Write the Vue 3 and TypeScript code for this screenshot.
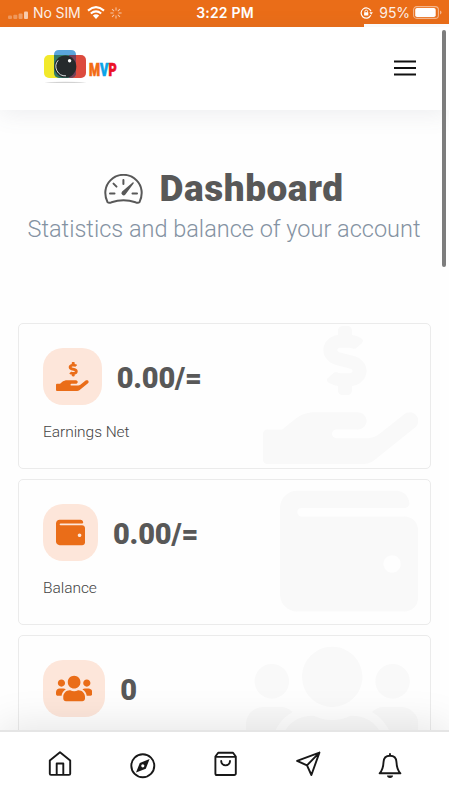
<script setup lang="ts">
interface Shape {
  viewBox: string
  path: string
}

interface Stat {
  value: string
  label: string
  icon: Shape
}

const earnings: Shape = {
  viewBox: '0 0 576 512',
  path: 'M271.06,144.3l54.27,14.3a8.59,8.59,0,0,1,6.63,8.1c0,4.6-4.09,8.4-9.12,8.4h-35.6a30,30,0,0,1-11.19-2.2c-5.24-2.2-11.28-1.7-15.3,2l-19,17.5a11.68,11.68,0,0,0-2.25,2.66,11.42,11.42,0,0,0,3.88,15.74,83.77,83.77,0,0,0,34.51,11.5V240c0,8.8,7.83,16,17.37,16h17.37c9.55,0,17.38-7.2,17.38-16V222.4c32.93-3.6,57.84-31,53.5-63-3.15-23-22.46-41.3-46.56-47.7L282.68,97.4a8.59,8.59,0,0,1-6.63-8.1c0-4.6,4.09-8.4,9.12-8.4h35.6A30,30,0,0,1,332,83.1c5.23,2.2,11.28,1.7,15.3-2l19-17.5A11.31,11.31,0,0,0,368.47,61a11.43,11.43,0,0,0-3.84-15.78,83.82,83.82,0,0,0-34.52-11.5V16c0-8.8-7.82-16-17.37-16H295.37C285.82,0,278,7.2,278,16V33.6c-32.89,3.6-57.85,31-53.51,63C227.63,119.6,247,137.9,271.06,144.3ZM565.3 328.1c-11.8-10.7-30.2-10-42.6 0L430.3 402c-11.3 9.1-25.4 14-40 14H272c-8.8 0-16-7.2-16-16s7.2-16 16-16h78.3c15.9 0 30.7-10.9 33.3-26.6 3.3-20-12.1-37.4-31.6-37.4H192c-27 0-53.1 9.3-74.1 26.3L71.4 384H16c-8.8 0-16 7.2-16 16v96c0 8.8 7.2 16 16 16h356.8c14.5 0 28.6-4.9 40-14L564 377c15.2-12.1 16.4-35.3 1.3-48.9z',
}

const wallet: Shape = {
  viewBox: '0 0 512 512',
  path: 'M461.2 128H80c-8.84 0-16-7.16-16-16s7.16-16 16-16h384c8.84 0 16-7.16 16-16 0-26.51-21.49-48-48-48H64C28.65 32 0 60.65 0 96v320c0 35.35 28.65 64 64 64h397.2c28.02 0 50.8-21.53 50.8-48V176c0-26.47-22.78-48-50.8-48zM416 336c-17.67 0-32-14.33-32-32s14.33-32 32-32 32 14.33 32 32-14.33 32-32 32z',
}

const users: Shape = {
  viewBox: '0 0 640 512',
  path: 'M96 224c35.3 0 64-28.7 64-64s-28.7-64-64-64-64 28.7-64 64 28.7 64 64 64zm448 0c35.3 0 64-28.7 64-64s-28.7-64-64-64-64 28.7-64 64 28.7 64 64 64zm32 32h-64c-17.6 0-33.5 7.1-45.1 18.6 40.3 22.1 68.9 62 75.1 109.4h66c17.7 0 32-14.3 32-32v-32c0-35.3-28.7-64-64-64zm-256 0c61.9 0 112-50.1 112-112S381.9 32 320 32 208 82.1 208 144s50.1 112 112 112zm76.8 32h-8.3c-20.8 10-43.9 16-68.5 16s-47.6-6-68.5-16h-8.3C179.6 288 128 339.6 128 403.2V432c0 26.5 21.5 48 48 48h288c26.5 0 48-21.5 48-48v-28.8c0-63.6-51.6-115.2-115.2-115.2zm-223.7-13.4C161.5 263.1 145.6 256 128 256H64c-35.3 0-64 28.7-64 64v32c0 17.7 14.3 32 32 32h65.9c6.3-47.4 34.9-87.3 75.2-109.4z',
}

const stats: Stat[] = [
  { value: '0.00/=', label: 'Earnings Net', icon: earnings },
  { value: '0.00/=', label: 'Balance', icon: wallet },
  { value: '0', label: '', icon: users },
]

const spokes: number[] = [0, 45, 90, 135, 180, 225, 270, 315]
</script>

<template>
  <div class="screen">
    <div class="status">
      <div class="status-left">
        <svg class="signal" viewBox="0 0 20 8">
          <rect x="0" y="4.5" width="4" height="3.5" rx="1" opacity=".3" />
          <rect x="5.3" y="3.8" width="4" height="4.2" rx="1" opacity=".3" />
          <rect x="10.6" y="2.5" width="4" height="5.5" rx="1" opacity=".35" />
          <rect x="16" y="0.5" width="4" height="7.5" rx="1" opacity=".65" />
        </svg>
        <span class="carrier">No SIM</span>
        <svg class="wifi" viewBox="0 0 18 13">
          <path d="M1 4.6Q9-2.2 17 4.6M3.8 7.5Q9 3.2 14.2 7.5" fill="none" stroke="#fff" stroke-width="2.1" />
          <path d="M5.8 9.6Q9 7 12.2 9.6L9 13Z" fill="#fff" />
        </svg>
        <svg class="spinner" viewBox="-6 -6 12 12">
          <path v-for="a in spokes" :key="a" d="M0-2.5V-5.6" :transform="`rotate(${a})`" stroke="#fff" stroke-width="1" opacity=".65" />
        </svg>
      </div>
      <span class="clock">3:22 PM</span>
      <div class="status-right">
        <svg class="lock" viewBox="0 0 13 12">
          <path d="M10.8 8.3A5.1 5.1 0 1 1 11 4.3" fill="none" stroke="#fff" stroke-width="1.2" />
          <path d="M9.4 5.3h3.5l-1.7 2.4z" fill="#fff" />
          <rect x="4.1" y="5.3" width="4.2" height="3.3" rx=".4" fill="#fff" />
          <path d="M4.9 5.5V4.4a1.3 1.3 0 0 1 2.6 0v1.1" fill="none" stroke="#fff" stroke-width=".9" />
        </svg>
        <span class="percent">95%</span>
        <svg class="battery" viewBox="0 0 29 13">
          <rect x=".6" y=".6" width="24.8" height="11.8" rx="3.2" fill="none" stroke="#fff" stroke-opacity=".5" stroke-width="1.1" />
          <rect x="2.2" y="2" width="20.5" height="9" rx="1.8" fill="#fff" />
          <path d="M27 4.5q1.5.7 1.5 2t-1.5 2z" fill="#fff" opacity=".5" />
        </svg>
      </div>
      <i class="progress-gap"></i>
    </div>

    <header class="topbar">
      <div class="brand">
        <svg class="camera" viewBox="0 0 44 34">
          <ellipse cx="22.5" cy="32.3" rx="21" ry=".6" fill="#d2d2d2" />
          <rect x="1" y="5" width="25" height="23" rx="5" fill="#f2e92b" />
          <rect x="17" y="5" width="26" height="23" rx="5" fill="#dc4b3e" />
          <path d="M11 5h22v18a5 5 0 0 1-5 5H16a5 5 0 0 1-5-5z" fill="#337a68" />
          <path d="M26 5h7v18a5 5 0 0 1-5 5h-2z" fill="#773f58" />
          <path d="M11 5q0-5 5-5h12q5 0 5 5z" fill="#5aa5dc" />
          <circle cx="22.3" cy="16.6" r="11" fill="#252a2c" />
          <path d="M15.2 10.3A9.4 9.4 0 0 0 23 25.8" fill="none" stroke="#e8eded" stroke-width=".9" />
          <circle cx="26.6" cy="10.8" r="1.7" fill="#fff" />
        </svg>
        <span class="brand-name"><b class="m">M</b><b class="v">V</b><b class="p">P</b></span>
      </div>
      <svg class="menu" viewBox="0 0 22 16">
        <path d="M0 1.4h22M0 8h22M0 14.6h22" stroke="#111" stroke-width="2" />
      </svg>
    </header>

    <main class="content">
      <div class="heading">
        <svg class="gauge" viewBox="0 0 39 30">
          <path d="M3.5 28.1C-.2 20.5.8 12 6.4 6.4A18.2 18.2 0 0 1 32.6 6.4C38.2 12 39.2 20.5 35.5 28.1C34.6 29 33.2 29 31.5 28.3C23 25.4 16 25.4 7.5 28.3C5.8 29 4.4 29 3.5 28.1Z" />
          <path d="M19.4 6v4M9.5 9.6l3 3M6 19.6h4.5M28.5 19.6H33" />
          <path class="needle" d="M28.6 8.5c.7-.5 1.5.2 1 .9L21.4 20.4a2.2 2.2 0 1 1-3.3-2.9z" />
        </svg>
        <h1>Dashboard</h1>
      </div>
      <p class="subtitle">Statistics and balance of your account</p>

      <section class="cards">
        <article v-for="(stat, i) in stats" :key="i" class="card">
          <svg class="watermark" :viewBox="stat.icon.viewBox"><path :d="stat.icon.path" /></svg>
          <div class="row">
            <div class="badge">
              <svg class="glyph" :viewBox="stat.icon.viewBox"><path :d="stat.icon.path" /></svg>
            </div>
            <strong class="value">{{ stat.value }}</strong>
          </div>
          <div v-if="stat.label" class="label">{{ stat.label }}</div>
        </article>
      </section>
    </main>

    <i class="scrollbar"></i>

    <nav class="tabs">
      <svg class="tab" viewBox="0 0 28 28">
        <path d="M3.8 10.4 14 2.3l10.2 8.1v13.3a1.2 1.2 0 0 1-1.2 1.2H5a1.2 1.2 0 0 1-1.2-1.2zM10.7 24.8V13.5h6.6v11.3" />
      </svg>
      <svg class="tab" viewBox="0 0 28 28">
        <circle cx="13.8" cy="15.8" r="11.5" />
        <path class="solid" fill-rule="evenodd" d="M20.6 9 16.8 18.7 7 22.6 10.8 12.9zM13.8 14.2a1.6 1.6 0 1 0 0 3.2 1.6 1.6 0 0 0 0-3.2z" />
      </svg>
      <svg class="tab" viewBox="0 0 28 28">
        <path d="M4.4 6.5 7.2 2.7h14.8l2.8 3.8v16.9a1.6 1.6 0 0 1-1.6 1.6H6a1.6 1.6 0 0 1-1.6-1.6zM4.4 6.9h20.4M10.2 11a4.4 4.4 0 0 0 8.8 0" />
      </svg>
      <svg class="tab" viewBox="0 0 28 28">
        <path d="M25.4 2.6 17.4 25 13 15.3 3.1 10.9zM25.4 2.6 13 15.3" />
      </svg>
      <svg class="tab" viewBox="0 0 28 28">
        <path d="M14 5.8c4.1 0 6.3 2.6 6.5 6.4.2 5.2 1.2 8.2 3.9 11.1H3.6c2.7-2.9 3.7-5.9 3.9-11.1.2-3.8 2.4-6.4 6.5-6.4zM14 4v1.6" />
        <path class="solid" d="M11 25.6h6a3 2.4 0 0 1-6 0z" />
      </svg>
    </nav>
  </div>
</template>

<style>
body {
  margin: 0;
  overflow: hidden;
  background: #fff;
}
</style>

<style scoped>
.screen {
  position: relative;
  display: flex;
  flex-direction: column;
  width: 100%;
  height: 800px;
  overflow: hidden;
  background: #fefefe;
  color: #585858;
  font-family: Roboto, "Liberation Sans", sans-serif;
}
.status {
  position: relative;
  display: grid;
  grid-template-columns: 1fr auto 1fr;
  align-items: center;
  flex: none;
  height: 27px;
  padding: 0 7px 0 8px;
  box-sizing: border-box;
  background: #ea6d18;
  color: #fff;
  font: 400 14px/25px Inter, Roboto, sans-serif;
}
.status-left,
.status-right {
  display: flex;
  align-items: center;
  height: 25px;
  align-self: start;
}
.status-right {
  justify-content: flex-end;
}
.signal {
  width: 20px;
  height: 8px;
  margin: 4px 5px 0 0;
  fill: #fff;
}
.carrier {
  width: 47px;
  letter-spacing: -0.1px;
  white-space: nowrap;
  opacity: 0.9;
}
.wifi {
  width: 18px;
  height: 13px;
  margin-left: 7px;
}
.spinner {
  width: 12px;
  height: 12px;
  margin-left: 5px;
}
.clock {
  align-self: start;
  font-weight: 600;
  letter-spacing: 0.2px;
}
.lock {
  width: 13px;
  height: 12px;
  margin-right: 6px;
}
.percent {
  letter-spacing: -0.1px;
  opacity: 0.9;
}
.battery {
  width: 29px;
  height: 13px;
  margin-left: 3px;
}
.progress-gap {
  position: absolute;
  right: 0;
  bottom: 0;
  width: 85px;
  height: 3px;
  background: #fff;
}
.topbar {
  position: relative;
  display: flex;
  align-items: center;
  justify-content: space-between;
  flex: none;
  height: 83px;
  padding: 0 33px 1px 43px;
  box-sizing: border-box;
  background: #fff;
  box-shadow: 0 4px 22px rgba(90, 100, 115, 0.1);
}
.brand {
  display: flex;
  align-items: center;
  margin-top: -2px;
}
.camera {
  width: 44px;
  height: 34px;
}
.brand-name {
  display: flex;
  margin: 6px 0 0 2px;
  font: 900 17.5px/18px Roboto, sans-serif;
  -webkit-text-stroke: 0.7px;
  transform: scaleX(0.72);
  transform-origin: left;
}
.brand-name b {
  font-weight: 900;
}
.m {
  color: #f26b13;
}
.v {
  color: #0aa4e8;
}
.p {
  color: #ec1027;
}
.menu {
  width: 22px;
  height: 16px;
}
.content {
  flex: 1;
  min-height: 0;
}
.heading {
  display: flex;
  align-items: center;
  justify-content: center;
  height: 44px;
  padding: 57px 1px 0 0;
  gap: 17px;
}
.gauge {
  width: 39px;
  height: 30px;
  margin-top: -1px;
  fill: none;
  stroke: #585858;
  stroke-width: 2;
  stroke-linecap: round;
}
.gauge .needle {
  fill: #585858;
  stroke: none;
}
h1 {
  margin: 0;
  width: 185px;
  font-size: 37px;
  font-weight: 900;
  line-height: 44px;
  letter-spacing: 0.55px;
  white-space: nowrap;
}
.subtitle {
  margin: 0 1px 0 0;
  height: 36px;
  text-align: center;
  font-size: 23.5px;
  font-weight: 300;
  line-height: 37px;
  color: #8492a2;
  white-space: nowrap;
}
.cards {
  display: flex;
  flex-direction: column;
  gap: 10px;
  padding: 76px 18px 0;
}
.card {
  position: relative;
  box-sizing: border-box;
  height: 146px;
  padding: 24px;
  border: 1px solid #ebebeb;
  border-radius: 5px;
  overflow: hidden;
}
.watermark {
  position: absolute;
  top: 2px;
  right: 12px;
  height: 138px;
  fill: #f9f9f9;
}
.row {
  position: relative;
  display: flex;
  align-items: center;
  gap: 15px;
}
.badge {
  display: flex;
  padding: 14px 13px;
  border-radius: 20px;
  background: #fde6da;
}
.glyph {
  height: 29px;
  fill: #ea6d18;
}
.value {
  font-size: 29px;
  font-weight: 900;
  line-height: 36px;
  letter-spacing: -0.2px;
  padding-top: 2px;
}
.label {
  position: relative;
  margin-top: 16px;
  font-size: 15.5px;
  font-weight: 300;
  line-height: 22px;
  letter-spacing: -0.05px;
  color: #444;
}
.scrollbar {
  position: absolute;
  top: 30px;
  right: 3px;
  width: 4px;
  height: 237px;
  border-radius: 2px;
  background: #7d7d7d;
}
.tabs {
  position: relative;
  display: flex;
  justify-content: space-between;
  flex: none;
  height: 70px;
  padding: 18px 45px 0 46px;
  box-sizing: border-box;
  border-top: 2px solid #e5e5e5;
  background: #fff;
  box-shadow: 0 -4px 40px rgba(0, 0, 0, 0.1);
}
.tab {
  width: 28px;
  height: 28px;
  overflow: visible;
  fill: none;
  stroke: #181818;
  stroke-width: 1.9;
  stroke-linejoin: round;
  stroke-linecap: round;
}
.tab .solid {
  fill: #181818;
  stroke: none;
}
</style>
